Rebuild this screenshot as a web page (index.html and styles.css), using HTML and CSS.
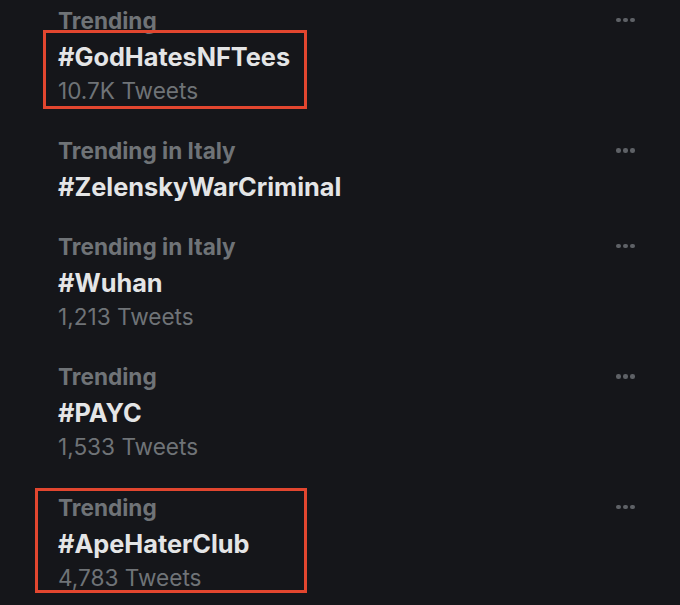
FILE: index.html
```html
<!DOCTYPE html>
<html>
<head>
<meta charset="utf-8">
<link rel="stylesheet" href="styles.css">
</head>
<body>
<div class="list">
  <div class="trend">
    <div class="cat">Trending</div>
    <div class="tag">#GodHatesNFTees</div>
    <div class="count">10.7K Tweets</div>
    <div class="more"><span></span><span></span><span></span></div>
    <div class="mark mark1"></div>
  </div>
  <div class="trend">
    <div class="cat">Trending in Italy</div>
    <div class="tag">#ZelenskyWarCriminal</div>
    <div class="more"><span></span><span></span><span></span></div>
  </div>
  <div class="trend">
    <div class="cat">Trending in Italy</div>
    <div class="tag">#Wuhan</div>
    <div class="count">1,213 Tweets</div>
    <div class="more"><span></span><span></span><span></span></div>
  </div>
  <div class="trend">
    <div class="cat">Trending</div>
    <div class="tag">#PAYC</div>
    <div class="count">1,533 Tweets</div>
    <div class="more"><span></span><span></span><span></span></div>
  </div>
  <div class="trend">
    <div class="cat">Trending</div>
    <div class="tag">#ApeHaterClub</div>
    <div class="count">4,783 Tweets</div>
    <div class="more"><span></span><span></span><span></span></div>
    <div class="mark mark2"></div>
  </div>
</div>
</body>
</html>
```
FILE: styles.css
```css
html, body {
  margin: 0;
  padding: 0;
  background: #15161a;
  height: 100%;
  overflow: hidden;
}
body {
  font-family: Inter, "Noto Sans", sans-serif;
  -webkit-font-smoothing: antialiased;
}
.list {
  margin-top: -10.5px;
  display: flex;
  flex-direction: column;
}
.trend {
  position: relative;
  padding: 13px 0 12.5px 58px;
  line-height: 35px;
}
.cat {
  color: #6f7377;
  font-weight: 700;
  font-size: 22.6px;
}
.tag {
  color: #e4e5e6;
  font-weight: 700;
  font-size: 25.3px;
  position: relative;
  top: 1px;
}
.count {
  color: #6f7377;
  font-weight: 400;
  font-size: 22.6px;
}
.more {
  position: absolute;
  left: 616px;
  top: 28px;
  display: flex;
  gap: 2.5px;
}
.more span {
  width: 4.5px;
  height: 4.5px;
  border-radius: 50%;
  background: #5e6166;
}
.mark {
  position: absolute;
  border: 3px solid #e2462f;
  box-sizing: border-box;
}
.mark1 {
  left: 43px;
  top: 40.5px;
  width: 264px;
  height: 79px;
}
.mark2 {
  left: 35px;
  top: 11.5px;
  width: 272px;
  height: 105px;
}
```
